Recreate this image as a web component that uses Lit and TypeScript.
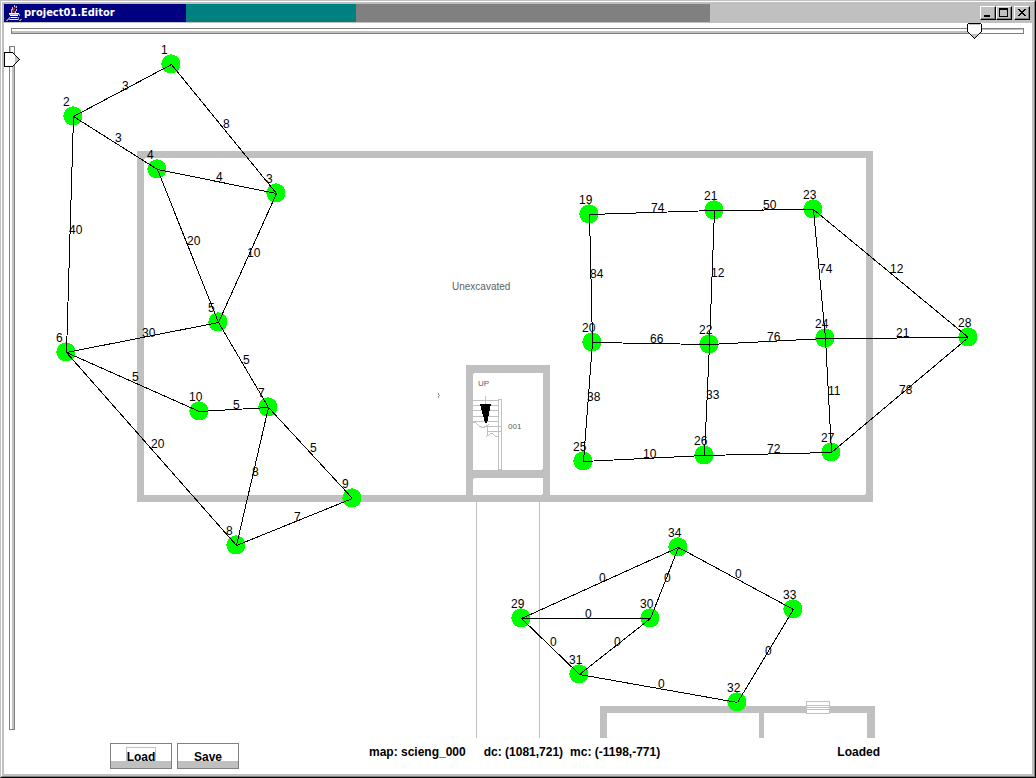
import { LitElement, css, html, svg, unsafeCSS } from "lit";
import { customElement, state } from "lit/decorators.js";

type Point = [number, number];

const NODES: Record<number, Point> = {
  1: [171, 64], 2: [73, 116], 3: [276, 193], 4: [157, 169], 5: [218, 322],
  6: [66, 352], 7: [268, 407], 8: [236, 545], 9: [352, 498], 10: [199, 411],
  19: [589, 214], 20: [592, 342], 21: [714, 210], 22: [709, 344], 23: [813, 209],
  24: [825, 338], 25: [583, 461], 26: [704, 455], 27: [831, 452], 28: [968, 337],
  29: [521, 618], 30: [650, 618], 31: [579, 674], 32: [737, 702], 33: [793, 609],
  34: [678, 547],
};

// [from, to, weight]
const EDGES: [number, number, number][] = [
  [1, 2, 3], [1, 3, 8], [2, 4, 3], [4, 3, 4], [2, 6, 40], [4, 5, 20], [3, 5, 10],
  [6, 5, 30], [5, 7, 5], [6, 10, 5], [10, 7, 5], [6, 8, 20], [7, 8, 8], [7, 9, 5],
  [8, 9, 7], [19, 21, 74], [21, 23, 50], [19, 20, 84], [21, 22, 12], [23, 24, 74],
  [23, 28, 12], [20, 22, 66], [22, 24, 76], [24, 28, 21], [20, 25, 38], [22, 26, 33],
  [24, 27, 11], [25, 26, 10], [26, 27, 72], [27, 28, 78], [29, 34, 0], [34, 30, 0],
  [29, 30, 0], [29, 31, 0], [30, 31, 0], [34, 33, 0], [33, 32, 0], [31, 32, 0],
];

const thumb = (body: string, w: number, h: number) =>
  unsafeCSS(
    `url("data:image/svg+xml,${encodeURIComponent(
      `<svg xmlns="http://www.w3.org/2000/svg" width="${w}" height="${h}" shape-rendering="crispEdges">${body}</svg>`
    )}")`
  );

const thumbDown = thumb(
  `<path d="M1.5 .5H13.5L14.5 1.5V8.5L7.5 15.5L.5 8.5V1.5Z" fill="#fff" stroke="#000"/><path d="M2 1.5H13" stroke="#c0c0c0"/><path d="M3 11H12L7.5 15Z" fill="#c0c0c0"/>`,
  15, 16
);
const thumbRight = thumb(
  `<path d="M.5 .5H8.5L15.5 7.5L8.5 14.5H.5Z" fill="#fff" stroke="#000"/><path d="M11 3V12L15 7.5Z" fill="#c0c0c0"/>`,
  16, 15
);

@customElement("map-slider")
class MapSlider extends LitElement {
  static properties = {
    vertical: { type: Boolean, reflect: true },
    value: { type: Number },
    label: { type: String },
  };
  declare vertical: boolean;
  declare value: number;
  declare label: string;

  static styles = css`
    :host { display: flex; }
    .range {
      appearance: none;
      -webkit-appearance: none;
      flex: 1;
      min-width: 0;
      height: 16px;
      margin: 0;
      background: none;
      outline: none;
    }
    .range::-webkit-slider-runnable-track {
      box-sizing: border-box;
      height: 6px;
      border: 1px solid #808080;
      background:
        linear-gradient(#fff 2px, #c0c0c0 2px) 0 0 / var(--at) 100% no-repeat,
        linear-gradient(#c0c0c0 1px, #fff 1px);
    }
    .range::-webkit-slider-thumb {
      -webkit-appearance: none;
      width: 15px;
      height: 16px;
      margin-block-start: -6px;
      background: ${thumbDown} no-repeat;
    }
    .vertical {
      writing-mode: vertical-lr;
      width: 16px;
      height: auto;
      min-height: 0;
    }
    .vertical::-webkit-slider-runnable-track {
      width: 6px;
      height: auto;
      background:
        linear-gradient(90deg, #c0c0c0 1px, #fff 1px) 0 0 / 100% var(--at) no-repeat,
        linear-gradient(90deg, #fff 2px, #c0c0c0 2px);
    }
    .vertical::-webkit-slider-thumb {
      width: 16px;
      height: 15px;
      background: ${thumbRight} no-repeat;
    }
  `;

  private onInput(e: Event) {
    this.value = Number((e.target as HTMLInputElement).value);
  }

  render() {
    return html`<input
      class="range ${this.vertical ? "vertical" : ""}"
      type="range" min="0" max="1000"
      aria-label=${this.label}
      .value=${String(this.value)}
      style="--at: ${this.value / 10}%"
      @input=${this.onInput}
    />`;
  }
}

@customElement("floor-map")
class FloorMap extends LitElement {
  static styles = css`
    :host { display: block; overflow: hidden; }
    .map { display: block; width: 100%; height: 100%; }
    .crisp { shape-rendering: crispEdges; }
    .wall { fill: #c0c0c0; }
    .room { fill: #fff; }
    .thin { fill: none; stroke: #c0c0c0; stroke-width: 1; }
    .mark { fill: none; stroke: #909090; stroke-width: 1; }
    .arrow { fill: #000; }
    .node { fill: #00ff00; }
    .edge { stroke: #000; stroke-width: 1; }
    .num { font: 12px "Liberation Sans", Arial, sans-serif; fill: #000; }
    .plan { font: 10px "Liberation Sans Narrow", "Liberation Sans", sans-serif; fill: #606060; }
    .small { font-size: 8px; }
  `;

  private plan() {
    return svg`
      <g class="crisp">
        <rect class="wall" x="137" y="151" width="736" height="351"/>
        <rect class="room" x="144" y="158" width="722" height="337" rx="2"/>
        <rect class="wall" x="466" y="365" width="84" height="137"/>
        <rect class="room" x="473" y="373" width="70" height="97" rx="2"/>
        <rect class="room" x="473" y="478" width="70" height="17" rx="2"/>
        <path class="thin" d="M476.500 502V800M539.500 502V800"/>
        <path class="wall" d="M600 706H875V800H867V713H764V800H759V713H607V800H600Z"/>
        <rect class="room" x="806" y="701" width="24" height="13"/>
        <path class="thin" d="M806.500 701.500H829.500V713.500H806.500ZM807 705.500H829M807 707.500H829M807 709.500H829"/>
        <path class="thin" d="M473 400.500H498M473 405.500H498M473 410.500H498M473 416.500H498M473 421.500H498M484 426.500H501M487 431.500H501"/>
        <path class="thin" d="M498.500 399.500H501.500V469.500H498.500Z"/>
        <path class="thin" d="M485.500 396V405M472 423L475 422L479 426L484 428L488 425L487 436L492 433L495 436L498 436"/>
        <path class="arrow" d="M480 404H491L487 423H485Z"/>
        <path class="mark" d="M438.500 393V395M439.500 395V396M438.500 396V398"/>
      </g>
      <text class="plan" x="452" y="290">Unexcavated</text>
      <text class="plan small" x="478" y="386">UP</text>
      <text class="plan small" x="508" y="429">001</text>`;
  }

  render() {
    return html`<svg class="map" role="img" aria-label="Floor map with numbered nodes">
      <g transform="translate(-20 -39)">
        ${this.plan()}
        <g class="crisp">
          ${Object.values(NODES).map(([x, y]) => svg`<circle class="node" cx=${x} cy=${y} r="9.600"/>`)}
        </g>
        <g class="crisp" transform="translate(0.500 0.500)">
          ${EDGES.map(([a, b]) => svg`<line class="edge" x1=${NODES[a][0]} y1=${NODES[a][1]} x2=${NODES[b][0]} y2=${NODES[b][1]}/>`)}
        </g>
        ${Object.entries(NODES).map(([id, [x, y]]) => svg`<text class="num" x=${x - 10} y=${y - 10}>${id}</text>`)}
        ${EDGES.map(([a, b, w]) => svg`<text class="num"
          x=${Math.floor((NODES[a][0] + NODES[b][0]) / 2)}
          y=${Math.floor((NODES[a][1] + NODES[b][1]) / 2)}>${w}</text>`)}
      </g>
    </svg>`;
  }
}

@customElement("app-root")
class AppRoot extends LitElement {
  @state() private status = "Loaded";

  static styles = css`
    :host {
      display: block;
      font: bold 12px/16px "Liberation Sans", Arial, sans-serif;
      color: #000;
    }
    .frame {
      box-sizing: border-box;
      height: 100vh;
      border: 1px solid;
      border-color: #c0c0c0 #000 #000 #c0c0c0;
    }
    .bevel {
      box-sizing: border-box;
      height: 100%;
      border: 1px solid;
      border-color: #fff #808080 #808080 #fff;
      background: #c0c0c0;
      padding: 2px;
      display: flex;
      flex-direction: column;
    }
    .title {
      display: flex;
      align-items: center;
      height: 18px;
      padding: 0 2px;
      margin-bottom: 1px;
      background: linear-gradient(90deg, #000080 17.7%, #008080 17.7% 34.24%, #808080 34.24% 68.68%, #c0c0c0 68.68%);
      color: #fff;
    }
    .name {
      flex: 1;
      margin: 0 0 0 2px;
      font: bold 11px/18px "DejaVu Sans Condensed", "DejaVu Sans", sans-serif;
      white-space: nowrap;
    }
    .winbtn {
      box-sizing: border-box;
      width: 16px;
      height: 14px;
      padding: 0;
      border: 1px solid;
      border-color: #fff #000 #000 #fff;
      box-shadow: inset -1px -1px #808080;
      background: #c0c0c0;
    }
    .close { margin-left: 2px; }
    .glyph { display: block; }
    .client {
      flex: 1;
      min-height: 0;
      background: #fff;
      display: flex;
      flex-direction: column;
    }
    .zoom { margin: 0 8px 0 7px; }
    .work { flex: 1; min-height: 0; display: flex; }
    .scroll { margin: 7px 0 8px; }
    .map { flex: 1; min-width: 0; }
    .foot {
      display: flex;
      align-items: center;
      height: 36px;
      padding: 0 152px 0 106px;
      white-space: nowrap;
    }
    .buttons { display: flex; gap: 5px; }
    .btn {
      box-sizing: border-box;
      width: 62px;
      height: 26px;
      padding: 0;
      border: 1px solid #808080;
      background: linear-gradient(#fff 17px, #c0c0c0 17px);
      font: inherit;
      color: inherit;
    }
    .cap {
      display: inline-block;
      box-sizing: border-box;
      border: 1px solid transparent;
      height: 16px;
      line-height: 18px;
    }
    .focus { border-color: #c0c0c0; border-bottom: none; }
    .info { margin: 0 0 8px 130px; display: flex; }
    .coords { margin-left: 18px; }
    .mc { margin-left: 7px; }
    .state { margin: 0 0 8px auto; }
  `;

  render() {
    return html`
      <div class="frame"><div class="bevel">
        <header class="title">
          <svg class="glyph" width="16" height="18" aria-hidden="true">
            <g shape-rendering="crispEdges" fill="none">
              <path d="M8.500 1V3M10.500 2V4M6.500 3V6M5.500 5V9M10.500 5V7M9.500 7V9" stroke="#c0c0c0"/>
              <path d="M9.500 2V4M8.500 3V6M7.500 4V8M6.500 6V9M8.500 7V9" stroke="#a02020"/>
              <path d="M3 9.500H13M4 11.500H12M5 13.500H11" stroke="#fff"/>
              <path d="M3 10.500H12" stroke="#a0b8e0"/>
              <path d="M12 10.500H14M13.500 10V12M3 13.500H5M11 13.500H13M2 14.500H4M3.500 14V16M5 15.500H11M1 15.500H3M0 16.500H2M12.500 14V16M13 16.500H15M14 15.500H16" stroke="#909090"/>
              <path d="M4 15.500H12" stroke="#e0e8f0"/>
            </g>
          </svg>
          <h1 class="name">project01.Editor</h1>
          <button class="winbtn" aria-label="Minimize">
            <svg class="glyph" width="14" height="12"><path d="M3 8H9V10H3Z"/></svg>
          </button>
          <button class="winbtn" aria-label="Maximize">
            <svg class="glyph" width="14" height="12"><path fill-rule="evenodd" d="M2 1H11V10H2ZM3 3V9H10V3Z"/></svg>
          </button>
          <button class="winbtn close" aria-label="Close">
            <svg class="glyph" width="14" height="12"><path shape-rendering="crispEdges" d="M3 2H5V3H6V4H8V3H9V2H11V3H10V4H9V5H8V6H9V7H10V8H11V9H9V8H8V7H6V8H5V9H3V8H4V7H5V6H6V5H5V4H4V3H3Z"/></svg>
          </button>
        </header>
        <main class="client">
          <map-slider class="zoom" label="Horizontal position" .value=${959}></map-slider>
          <div class="work">
            <map-slider class="scroll" label="Vertical position" vertical .value=${8}></map-slider>
            <floor-map class="map"></floor-map>
          </div>
          <footer class="foot">
            <div class="buttons">
              <button class="btn" @click=${() => (this.status = "Loaded")}><span class="cap focus">Load</span></button>
              <button class="btn" @click=${() => (this.status = "Saved")}><span class="cap">Save</span></button>
            </div>
            <div class="info">
              <span>map: scieng_000</span>
              <span class="coords">dc: (1081,721)</span>
              <span class="mc">mc: (-1198,-771)</span>
            </div>
            <output class="state">${this.status}</output>
          </footer>
        </main>
      </div></div>`;
  }
}
